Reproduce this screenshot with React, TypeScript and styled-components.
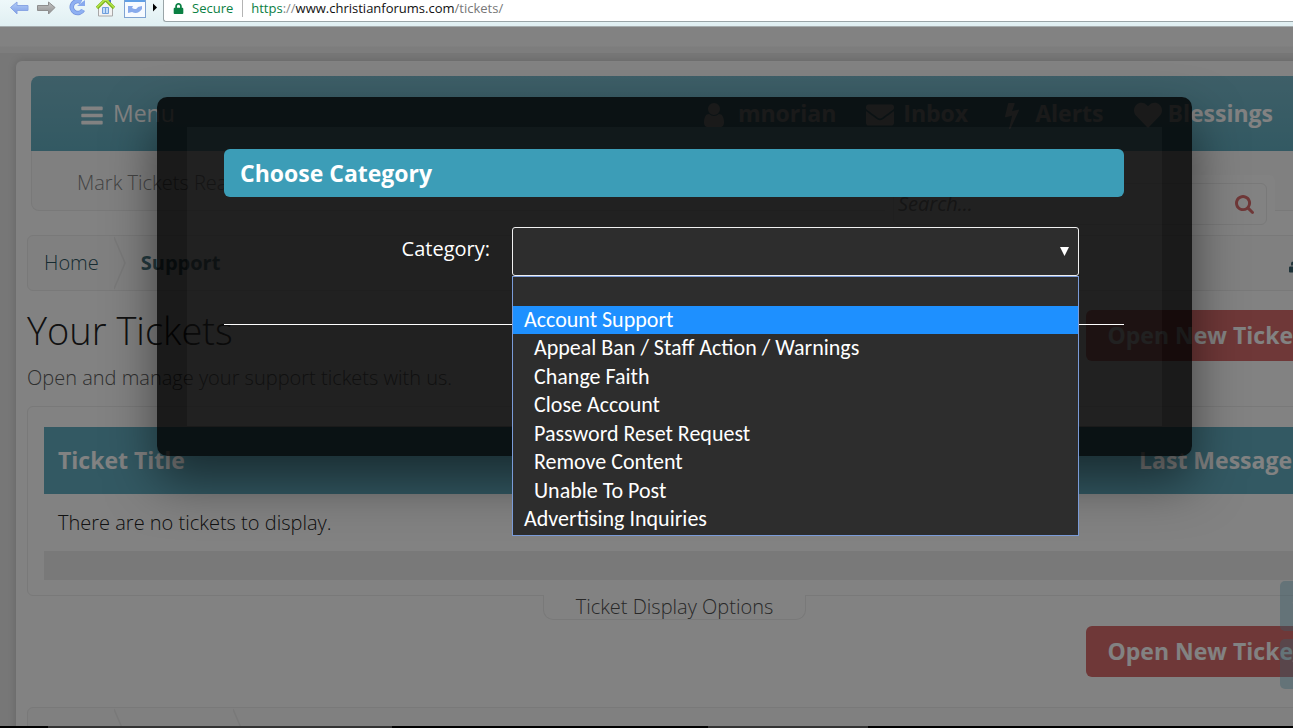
import React from "react";
import styled, { createGlobalStyle } from "styled-components";
import { FaEnvelope, FaHeart, FaSitemap, FaArrowUp, FaArrowDown, FaLock } from "react-icons/fa";

const Global = createGlobalStyle`
  *, *::before, *::after { box-sizing: border-box; }
  body {
    margin: 0;
    font-family: "Open Sans", "Noto Sans", sans-serif;
    font-size: 20px;
    font-weight: 300;
    line-height: 28px;
    color: #222;
  }
  button, input, select { font: inherit; color: inherit; }
  h1, h2, p, ul { margin: 0; padding: 0; }
  ul { list-style: none; }
  a { color: inherit; text-decoration: none; }
`;

const Screen = styled.div`
  height: 100vh;
  display: flex;
  flex-direction: column;
  overflow: hidden;
`;

const BrowserBar = styled.header`
  flex: none;
  display: flex;
  align-items: flex-start;
  height: 27px;
  background: linear-gradient(#eef8fa, #e0eff2);
  border-bottom: 1px solid #a5acae;
`;

const BrowserIcons = styled.div`
  flex: none;
  width: 163px;
  height: 22px;
`;

const AddressBar = styled.div`
  flex: 1;
  display: flex;
  align-items: center;
  height: 22px;
  padding: 0 0 4px 9px;
  background: #fff;
  border: solid #9aa5a8;
  border-width: 0 0 1px 1px;
  border-radius: 0 0 0 3px;
  font-size: 13px;
  font-weight: 400;
  line-height: 17px;
`;

const Secure = styled.span`
  display: flex;
  align-items: center;
  gap: 8px;
  padding-right: 9px;
  margin-right: 8px;
  border-right: 1px solid #b4b4b4;
  color: #0b8043;
`;

const UrlText = styled.span<{ $tone: string }>`
  color: ${(p) => p.$tone};
`;

const Viewport = styled.div`
  flex: 1;
  min-height: 0;
  position: relative;
  overflow: hidden;
`;

const Page = styled.div`
  position: relative;
  width: calc(100% + 56px);
  background: #e9e9e9;
`;

const TopStrip = styled.div`
  height: 26px;
  background: linear-gradient(#ffffff 19px, #f6f6f6 20px);
`;

const Sheet = styled.main`
  margin: 8px 16px 0;
  padding: 15px 11px 40px;
  background: #fff;
  border-radius: 6px;
  box-shadow: 0 0 8px rgba(0, 0, 0, 0.16);
`;

const NavArea = styled.div`
  position: relative;
  margin: 0 4px;
`;

const NavBar = styled.nav`
  display: flex;
  align-items: center;
  height: 75px;
  padding: 0 45px 1px 50px;
  background: linear-gradient(#7abacc, #64afc2);
  border-radius: 8px 8px 0 0;
  color: #fff;
  font-size: 23px;
  font-weight: 400;
`;

const NavLinks = styled.div`
  display: flex;
  gap: 30px;
  margin-left: auto;
  font-weight: 700;
`;

const NavLink = styled.a<{ $gap?: number }>`
  display: flex;
  align-items: center;
  gap: ${(p) => p.$gap ?? 9}px;
  svg {
    flex: none;
    box-sizing: content-box;
    padding-top: 4px;
  }
`;

const SubNav = styled.div`
  height: 60px;
  padding: 18px 45px;
  border: 1px solid #ededed;
  border-top: 0;
  border-radius: 0 0 8px 8px;
  background: #fbfbfb;
  color: #868686;
`;

const SearchBox = styled.form`
  position: absolute;
  top: 99px;
  right: 43px;
  width: 390px;
  padding: 8px;
  background: #fff;
  border-radius: 6px;
`;

const SearchField = styled.div`
  display: flex;
  align-items: center;
  height: 42px;
  padding: 0 12px 0 4px;
  border: 1px solid #ededed;
  border-radius: 6px;
`;

const SearchInput = styled.input`
  flex: 1;
  min-width: 0;
  padding: 0;
  border: 0;
  outline: 0;
  background: none;
  font-style: italic;
  font-weight: 400;
  &::placeholder { color: #8c8c8c; opacity: 1; }
`;

const SearchButton = styled.button`
  display: flex;
  padding: 0;
  border: 0;
  background: none;
  color: #da6e6e;
`;

const Crumbs = styled.nav`
  display: flex;
  align-items: center;
  height: 56px;
  margin-top: 24px;
  padding: 0 8px 0 16px;
  border: 1px solid #ededed;
  border-radius: 6px;
  background: #fbfbfb;
  color: #3c6470;
`;

const Chevron = styled.svg`
  flex: none;
  width: 12px;
  height: 54px;
  margin: 0 15px;
  fill: none;
  stroke: #ededed;
  stroke-width: 1.5;
`;

const CrumbLink = styled.a<{ $current?: boolean }>`
  font-weight: ${(p) => (p.$current ? 700 : 300)};
  color: ${(p) => (p.$current ? "#47727d" : "#2b5561")};
`;

const CrumbIcon = styled.span`
  display: flex;
  margin-left: auto;
`;

const TitleRow = styled.div`
  display: flex;
  justify-content: space-between;
  align-items: flex-start;
  height: 115px;
  padding-top: 19px;
`;

const Title = styled.h1`
  font-size: 38px;
  line-height: 40px;
  font-weight: 300;
`;

const Intro = styled.p`
  margin-top: 14px;
  color: #5c5c5c;
`;

const RedButton = styled.button`
  height: 51px;
  padding: 0 19px 1px 22px;
  border: 0;
  border-radius: 6px;
  background: #da6e6e;
  color: #fff;
  font-size: 23px;
  font-weight: 700;
  white-space: nowrap;
`;

const Frame = styled.section`
  height: 190px;
  padding: 20px 16px 0;
  border: 1px solid #ededed;
  border-radius: 6px;
`;

const Tickets = styled.table`
  width: 100%;
  border-collapse: collapse;
  th {
    height: 67px;
    padding: 0 14px 1px;
    background: #64afc2;
    color: #fff;
    font-size: 23px;
    font-weight: 700;
    text-align: left;
  }
  th:last-child { padding-right: 13px; text-align: right; }
  td { height: 57px; padding: 0 14px; }
`;

const TableFoot = styled.div`
  height: 29px;
  background: #eee;
`;

const BelowFrame = styled.div`
  display: grid;
  grid-template-rows: 31px 51px;
  justify-items: center;
  align-items: start;
  margin-top: -1px;
  height: 112px;
  ${RedButton} { justify-self: end; }
`;

const DisplayOptions = styled.button`
  height: 25px;
  padding: 0 32px;
  border: 1px solid #ededed;
  border-top: 0;
  border-radius: 0 0 10px 10px;
  background: #fff;
  color: #505050;
  line-height: 22px;
`;

const LowerCrumbs = styled(Crumbs)`
  margin-top: 0;
  padding-left: 71px;
`;

const LowerGap = styled.span`
  width: 77px;
`;

const Jump = styled.div`
  position: absolute;
  top: 554px;
  right: 0;
  width: 69px;
  display: grid;
  gap: 8px;
`;

const JumpButton = styled.button`
  height: 50px;
  padding-left: 11px;
  border: 0;
  border-radius: 5px;
  background: rgba(110, 180, 205, 0.4);
  color: rgba(255, 255, 255, 0.6);
  text-align: left;
`;

const Overlay = styled.div`
  position: absolute;
  inset: 0;
  display: flex;
  justify-content: center;
  align-items: flex-start;
  padding: 70px 157px;
  background: rgba(0, 0, 0, 0.49);
`;

const Dialog = styled.section`
  flex: 1;
  max-width: 1200px;
  padding: 30px;
  border-radius: 10px;
  background: rgba(0, 0, 0, 0.8);
  box-shadow: 0 25px 50px rgba(0, 0, 0, 0.5);
  color: #fff;
`;

const DialogBody = styled.form`
  height: 299px;
  padding: 22px 38px 0 37px;
  background: rgba(255, 255, 255, 0.03);
`;

const DialogTitle = styled.h2`
  padding: 10px 16px;
  border-radius: 6px;
  background: #3c9db7;
  font-size: 23px;
  line-height: 28px;
  font-weight: 700;
`;

const FieldRow = styled.div`
  display: grid;
  grid-template-columns: 266px 1fr;
  gap: 22px;
  margin-top: 30px;
  padding: 0 45px 48px 0;
  border-bottom: 1px solid #fff;
`;

const FieldLabel = styled.label`
  padding-top: 8px;
  font-weight: 400;
  text-align: right;
`;

const SelectBox = styled.div`
  position: relative;
`;

const Select = styled.select`
  display: block;
  width: 100%;
  height: 49px;
  padding: 0 10px;
  appearance: none;
  border: 1px solid #f0f0f0;
  border-radius: 3px;
  outline: 0;
  background: #2d2d2d;
`;

const Arrow = styled.svg`
  position: absolute;
  top: 20px;
  right: 10px;
  width: 9px;
  height: 9px;
  fill: #fff;
  pointer-events: none;
`;

const Options = styled.ul`
  position: absolute;
  top: 49px;
  left: 0;
  right: 0;
  display: grid;
  grid-auto-rows: 1fr;
  height: 260px;
  padding-bottom: 1px;
  border: 1px solid #7a9bd8;
  background: #2d2d2d;
  font-family: Carlito, Lato, sans-serif;
  font-size: 22px;
  font-weight: 400;
`;

const Option = styled.li<{ $child?: boolean; $active?: boolean }>`
  padding-left: ${(p) => (p.$child ? 21 : 11)}px;
  background: ${(p) => (p.$active ? "#1e90ff" : "transparent")};
`;

const Taskbar = styled.footer`
  flex: none;
  height: 2px;
  background: linear-gradient(90deg, #000 48px, #333 48px 392px, #000 392px 708px, #333 708px 868px, #000 868px);
`;

const options = [
  { text: "" },
  { text: "Account Support", active: true },
  { text: "Appeal Ban / Staff Action / Warnings", child: true },
  { text: "Change Faith", child: true },
  { text: "Close Account", child: true },
  { text: "Password Reset Request", child: true },
  { text: "Remove Content", child: true },
  { text: "Unable To Post", child: true },
  { text: "Advertising Inquiries" },
];

const BAR = "h1408q26 0 45 19t19 45v128q0 26-19 45t-45 19h-1408q-26 0-45-19t-19-45v-128q0-26 19-45t45-19z";

const MenuIcon = () => (
  <svg width="22" height="25" viewBox="128 0 1536 1792" fill="currentColor" aria-hidden="true">
    <path d={`M192 256${BAR}M192 768${BAR}M192 1280${BAR}`} />
  </svg>
);

const UserIcon = () => (
  <svg width="20" height="28" viewBox="256 0 1280 1792" fill="currentColor" aria-hidden="true">
    <path d="M1536 1399q0 109-62.500 187t-150.500 78h-854q-88 0-150.500-78t-62.500-187q0-85 8.500-160.500t31.500-152 58.500-131 94-89 134.500-34.500q131 128 313 128t313-128q76 0 134.500 34.500t94 89 58.500 131 31.500 152 8.500 160.500zm-256-887q0 159-112.500 271.500t-271.500 112.500-271.500-112.500-112.500-271.500 112.500-271.500 271.500-112.500 271.500 112.500 112.500 271.500z" />
  </svg>
);

const BoltIcon = () => (
  <svg width="28" height="28" viewBox="0 0 1792 1792" fill="currentColor" aria-hidden="true">
    <path d="M1333 566q18 20 7 44l-540 1157q-13 25-42 25-4 0-14-2-17-5-25.500-19t-4.500-30l197-808-406 101q-4 1-12 1-18 0-31-11-18-15-13-39l201-825q4-14 16-23t28-9h328q19 0 32 12.500t13 29.500q0 8-5 18l-171 463 396-98q8-2 12-2 19 0 34 15z" />
  </svg>
);

const SearchIcon = () => (
  <svg width="19" height="19" viewBox="64 128 1664 1664" fill="currentColor" aria-hidden="true">
    <path d="M1216 832q0-185-131.500-316.500t-316.500-131.500-316.500 131.500-131.500 316.500 131.500 316.500 316.500 131.500 316.500-131.500 131.500-316.500zm512 832q0 52-38 90t-90 38q-54 0-90-38l-343-342q-179 124-399 124-143 0-273.500-55.500t-225-150-150-225-55.500-273.500 55.500-273.500 150-225 225-150 273.500-55.500 273.500 55.500 225 150 150 225 55.500 273.500q0 220-124 399l343 343q37 37 37 90z" />
  </svg>
);

function ToolbarDrawing() {
  return (
    <svg width="163" height="22" viewBox="0 0 163 22" aria-hidden="true">
      <defs>
        <linearGradient id="blue" x1="0" y1="0" x2="0" y2="1">
          <stop offset="0" stopColor="#b4cff8" />
          <stop offset="1" stopColor="#7d9de6" />
        </linearGradient>
        <linearGradient id="grey" x1="0" y1="0" x2="0" y2="1">
          <stop offset="0" stopColor="#c4c4c4" />
          <stop offset="1" stopColor="#8f8f8f" />
        </linearGradient>
      </defs>
      <path d="M10.500 7.500 17 2v3.500h11v5H17V14z" fill="url(#blue)" stroke="#8aa6e4" />
      <path d="M55 7.500 48.500 2v3.500h-11v5h11V14z" fill="url(#grey)" stroke="#8e8e8e" />
      <path d="M81 2a6 6 0 1 0 2 8" fill="none" stroke="#7492dc" strokeWidth="4.500" />
      <path d="M81 2a6 6 0 1 0 2 8" fill="none" stroke="#8eb0f2" strokeWidth="3" />
      <path d="M85 0v6h-8z" fill="#88a9ee" />
      <path d="M98.500 6.500v9.500h14V6.500L105.500 0z" fill="#f2f2f2" stroke="#a8a8a8" />
      <path d="M109 0h2v4h-2z" fill="#4e6fd0" />
      <path d="m97 8 8.500-8.500L114 8" fill="none" stroke="#7eb51e" strokeWidth="3.200" />
      <path d="m97 7.500 8.500-8.500 8.500 8.500" fill="none" stroke="#b4e64a" strokeWidth="1.500" />
      <path d="M102.500 7.500h6v6h-6zM105.500 7.500v6" fill="#c2dcfa" stroke="#6f9fdc" />
      <rect x="124.500" y="-3.500" width="21" height="21" fill="#f6faff" stroke="#7fa3d2" />
      <path d="M125 0h20v2h-20z" fill="#5f9fe6" />
      <path d="M128 6h5l-1 2c3 2 5 1 6-1l4-1v3c-3 4-6 5-10 3l-4 1z" fill="#88aaec" />
      <path d="m153 3.500 4 4-4 4z" fill="#000" />
    </svg>
  );
}

export default function App() {
  return (
    <>
      <Global />
      <Screen>
        <BrowserBar>
          <BrowserIcons>
            <ToolbarDrawing />
          </BrowserIcons>
          <AddressBar>
            <Secure>
              <FaLock size={11} />
              Secure
            </Secure>
            <UrlText $tone="#0b8043">https</UrlText>
            <UrlText $tone="#8a8a8a">://</UrlText>
            <UrlText $tone="#111">www.christianforums.com</UrlText>
            <UrlText $tone="#777">/tickets/</UrlText>
          </AddressBar>
        </BrowserBar>

        <Viewport>
          <Page>
            <TopStrip />
            <Sheet>
              <NavArea>
                <NavBar>
                  <NavLink href="#menu" $gap={10}>
                    <MenuIcon />
                    Menu
                  </NavLink>
                  <NavLinks>
                    <NavLink href="#profile" $gap={14}>
                      <UserIcon />
                      mnorian
                    </NavLink>
                    <NavLink href="#inbox">
                      <FaEnvelope size={28} />
                      Inbox
                    </NavLink>
                    <NavLink href="#alerts">
                      <BoltIcon />
                      Alerts
                    </NavLink>
                    <NavLink href="#blessings" $gap={6}>
                      <FaHeart size={28} />
                      Blessings
                    </NavLink>
                  </NavLinks>
                </NavBar>
                <SubNav>
                  <a href="#read">Mark Tickets Read</a>
                </SubNav>
                <SearchBox>
                  <SearchField>
                    <SearchInput aria-label="Search" placeholder="Search..." />
                    <SearchButton type="button" aria-label="Search">
                      <SearchIcon />
                    </SearchButton>
                  </SearchField>
                </SearchBox>
              </NavArea>

              <Crumbs aria-label="Breadcrumb">
                <CrumbLink href="#home">Home</CrumbLink>
                <Chevron viewBox="0 0 12 54">
                  <path d="M0 1 11 27 0 53" />
                </Chevron>
                <CrumbLink href="#support" $current>
                  Support
                </CrumbLink>
                <CrumbIcon>
                  <FaSitemap size={24} />
                </CrumbIcon>
              </Crumbs>

              <TitleRow>
                <div>
                  <Title>Your Tickets</Title>
                  <Intro>Open and manage your support tickets with us.</Intro>
                </div>
                <RedButton type="button">Open New Ticket</RedButton>
              </TitleRow>

              <Frame>
                <Tickets>
                  <thead>
                    <tr>
                      <th>Ticket Title</th>
                      <th>Last Message</th>
                    </tr>
                  </thead>
                  <tbody>
                    <tr>
                      <td colSpan={2}>There are no tickets to display.</td>
                    </tr>
                  </tbody>
                </Tickets>
                <TableFoot />
              </Frame>

              <BelowFrame>
                <DisplayOptions type="button">Ticket Display Options</DisplayOptions>
                <RedButton type="button">Open New Ticket</RedButton>
              </BelowFrame>

              <LowerCrumbs aria-label="Footer breadcrumb">
                <Chevron viewBox="0 0 12 54">
                  <path d="M0 1 11 27 0 53" />
                </Chevron>
                <LowerGap />
                <Chevron viewBox="0 0 12 54">
                  <path d="M0 1 11 27 0 53" />
                </Chevron>
              </LowerCrumbs>
            </Sheet>

            <Jump>
              <JumpButton type="button" aria-label="Scroll to top">
                <FaArrowUp size={20} />
              </JumpButton>
              <JumpButton type="button" aria-label="Scroll to bottom">
                <FaArrowDown size={20} />
              </JumpButton>
            </Jump>

            <Overlay>
              <Dialog role="dialog" aria-labelledby="dialog-title">
                <DialogBody>
                  <DialogTitle id="dialog-title">Choose Category</DialogTitle>
                  <FieldRow>
                    <FieldLabel htmlFor="category">Category:</FieldLabel>
                    <SelectBox>
                      <Select id="category" defaultValue="">
                        {options.map((o) => (
                          <option key={o.text}>{o.text}</option>
                        ))}
                      </Select>
                      <Arrow viewBox="0 0 9 9">
                        <path d="M0 0h9L4.500 9z" />
                      </Arrow>
                      <Options role="listbox" aria-label="Category">
                        {options.map((o) => (
                          <Option key={o.text} role="option" aria-selected={!!o.active} $child={o.child} $active={o.active}>
                            {o.text}
                          </Option>
                        ))}
                      </Options>
                    </SelectBox>
                  </FieldRow>
                </DialogBody>
              </Dialog>
            </Overlay>
          </Page>
        </Viewport>
        <Taskbar />
      </Screen>
    </>
  );
}
